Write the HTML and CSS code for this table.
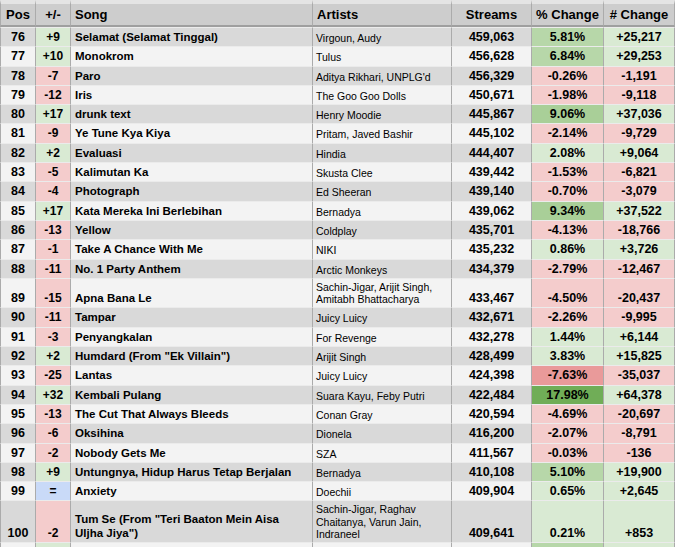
FILE: index.html
```html
<!DOCTYPE html>
<html>
<head>
<meta charset="utf-8">
<link rel="stylesheet" href="styles.css">
</head>
<body>
<table class="chart">
  <colgroup>
    <col class="c-pos"><col class="c-chg"><col class="c-song"><col class="c-art"><col class="c-str"><col class="c-pct"><col class="c-num">
  </colgroup>
  <thead>
    <tr>
      <th>Pos</th><th>+/-</th><th class="left">Song</th><th class="left">Artists</th><th>Streams</th><th>% Change</th><th># Change</th>
    </tr>
  </thead>
  <tbody>
    <tr><td class="pos">76</td><td class="chg up">+9</td><td class="song">Selamat (Selamat Tinggal)</td><td class="art">Virgoun, Audy</td><td class="num">459,063</td><td class="num g2">5.81%</td><td class="num up">+25,217</td></tr>
    <tr><td class="pos">77</td><td class="chg up">+10</td><td class="song">Monokrom</td><td class="art">Tulus</td><td class="num">456,628</td><td class="num g2">6.84%</td><td class="num up">+29,253</td></tr>
    <tr><td class="pos">78</td><td class="chg dn">-7</td><td class="song">Paro</td><td class="art">Aditya Rikhari, UNPLG'd</td><td class="num">456,329</td><td class="num dn">-0.26%</td><td class="num dn">-1,191</td></tr>
    <tr><td class="pos">79</td><td class="chg dn">-12</td><td class="song">Iris</td><td class="art">The Goo Goo Dolls</td><td class="num">450,671</td><td class="num dn">-1.98%</td><td class="num dn">-9,118</td></tr>
    <tr><td class="pos">80</td><td class="chg up">+17</td><td class="song">drunk text</td><td class="art">Henry Moodie</td><td class="num">445,867</td><td class="num g3">9.06%</td><td class="num up">+37,036</td></tr>
    <tr><td class="pos">81</td><td class="chg dn">-9</td><td class="song">Ye Tune Kya Kiya</td><td class="art">Pritam, Javed Bashir</td><td class="num">445,102</td><td class="num dn">-2.14%</td><td class="num dn">-9,729</td></tr>
    <tr><td class="pos">82</td><td class="chg up">+2</td><td class="song">Evaluasi</td><td class="art">Hindia</td><td class="num">444,407</td><td class="num up">2.08%</td><td class="num up">+9,064</td></tr>
    <tr><td class="pos">83</td><td class="chg dn">-5</td><td class="song">Kalimutan Ka</td><td class="art">Skusta Clee</td><td class="num">439,442</td><td class="num dn">-1.53%</td><td class="num dn">-6,821</td></tr>
    <tr><td class="pos">84</td><td class="chg dn">-4</td><td class="song">Photograph</td><td class="art">Ed Sheeran</td><td class="num">439,140</td><td class="num dn">-0.70%</td><td class="num dn">-3,079</td></tr>
    <tr><td class="pos">85</td><td class="chg up">+17</td><td class="song">Kata Mereka Ini Berlebihan</td><td class="art">Bernadya</td><td class="num">439,062</td><td class="num g3">9.34%</td><td class="num up">+37,522</td></tr>
    <tr><td class="pos">86</td><td class="chg dn">-13</td><td class="song">Yellow</td><td class="art">Coldplay</td><td class="num">435,701</td><td class="num dn">-4.13%</td><td class="num dn">-18,766</td></tr>
    <tr><td class="pos">87</td><td class="chg dn">-1</td><td class="song">Take A Chance With Me</td><td class="art">NIKI</td><td class="num">435,232</td><td class="num up">0.86%</td><td class="num up">+3,726</td></tr>
    <tr><td class="pos">88</td><td class="chg dn">-11</td><td class="song">No. 1 Party Anthem</td><td class="art">Arctic Monkeys</td><td class="num">434,379</td><td class="num dn">-2.79%</td><td class="num dn">-12,467</td></tr>
    <tr><td class="pos">89</td><td class="chg dn">-15</td><td class="song">Apna Bana Le</td><td class="art">Sachin-Jigar, Arijit Singh, Amitabh Bhattacharya</td><td class="num">433,467</td><td class="num dn">-4.50%</td><td class="num dn">-20,437</td></tr>
    <tr><td class="pos">90</td><td class="chg dn">-11</td><td class="song">Tampar</td><td class="art">Juicy Luicy</td><td class="num">432,671</td><td class="num dn">-2.26%</td><td class="num dn">-9,995</td></tr>
    <tr><td class="pos">91</td><td class="chg dn">-3</td><td class="song">Penyangkalan</td><td class="art">For Revenge</td><td class="num">432,278</td><td class="num up">1.44%</td><td class="num up">+6,144</td></tr>
    <tr><td class="pos">92</td><td class="chg up">+2</td><td class="song">Humdard (From "Ek Villain")</td><td class="art">Arijit Singh</td><td class="num">428,499</td><td class="num up">3.83%</td><td class="num up">+15,825</td></tr>
    <tr><td class="pos">93</td><td class="chg dn">-25</td><td class="song">Lantas</td><td class="art">Juicy Luicy</td><td class="num">424,398</td><td class="num r2">-7.63%</td><td class="num dn">-35,037</td></tr>
    <tr><td class="pos">94</td><td class="chg up">+32</td><td class="song">Kembali Pulang</td><td class="art">Suara Kayu, Feby Putri</td><td class="num">422,484</td><td class="num g4">17.98%</td><td class="num up">+64,378</td></tr>
    <tr><td class="pos">95</td><td class="chg dn">-13</td><td class="song">The Cut That Always Bleeds</td><td class="art">Conan Gray</td><td class="num">420,594</td><td class="num dn">-4.69%</td><td class="num dn">-20,697</td></tr>
    <tr><td class="pos">96</td><td class="chg dn">-6</td><td class="song">Oksihina</td><td class="art">Dionela</td><td class="num">416,200</td><td class="num dn">-2.07%</td><td class="num dn">-8,791</td></tr>
    <tr><td class="pos">97</td><td class="chg dn">-2</td><td class="song">Nobody Gets Me</td><td class="art">SZA</td><td class="num">411,567</td><td class="num dn">-0.03%</td><td class="num dn">-136</td></tr>
    <tr><td class="pos">98</td><td class="chg up">+9</td><td class="song">Untungnya, Hidup Harus Tetap Berjalan</td><td class="art">Bernadya</td><td class="num">410,108</td><td class="num g2">5.10%</td><td class="num up">+19,900</td></tr>
    <tr><td class="pos">99</td><td class="chg eq">=</td><td class="song">Anxiety</td><td class="art">Doechii</td><td class="num">409,904</td><td class="num up">0.65%</td><td class="num up">+2,645</td></tr>
    <tr><td class="pos">100</td><td class="chg dn">-2</td><td class="song">Tum Se (From "Teri Baaton Mein Aisa<br>Uljha Jiya")</td><td class="art">Sachin-Jigar, Raghav Chaitanya, Varun Jain, Indraneel</td><td class="num">409,641</td><td class="num up">0.21%</td><td class="num up">+853</td></tr>
    <tr class="cut"><td class="pos"></td><td class="chg up"></td><td class="song"></td><td class="art"></td><td class="num"></td><td class="num g2"></td><td class="num up"></td></tr>
  </tbody>
</table>
</body>
</html>
```
FILE: styles.css
```css
html, body {
  margin: 0;
  padding: 0;
  background: #ffffff;
  overflow: hidden;
}

.chart {
  border-collapse: separate;
  border-spacing: 0;
  table-layout: fixed;
  width: 675px;
  font-family: "Liberation Sans", Arial, sans-serif;
  color: #000;
}

.c-pos { width: 36px; }
.c-chg { width: 35px; }
.c-song { width: 242px; }
.c-art { width: 139px; }
.c-str { width: 80px; }
.c-pct { width: 72px; }
.c-num { width: 71px; }

.chart th {
  background: #cdcdcd;
  border-top: 4px solid #e4e4e4;
  border-bottom: 2px solid #9f9f9f;
  border-right: 1px solid #ababab;
  font-size: 13px;
  font-weight: bold;
  line-height: 15px;
  padding: 3px 2px 3px;
  text-align: center;
  white-space: nowrap;
}

.chart th:first-child,
.chart td:first-child {
  border-left: 1px solid #ababab;
}

.chart th.left {
  text-align: left;
  padding-left: 4px;
}

.chart td {
  border-right: 1px solid #ababab;
  border-bottom: 1px solid #ebebeb;
  padding: 2px 3px;
  line-height: 14.3px;
  vertical-align: bottom;
  text-align: center;
  font-weight: bold;
  font-size: 12.5px;
}

.chart tbody tr:first-child td {
  border-top: 1px solid #ececec;
}

.chart tbody tr.cut td {
  height: 4px;
  padding: 0;
  line-height: 0;
  border-bottom: 0;
}

.chart tbody tr:nth-child(odd) td { background: #d9d9d9; }
.chart tbody tr:nth-child(even) td { background: #f3f3f3; }

.chart td.song {
  text-align: left;
  font-size: 11.5px;
  padding-left: 4px;
}

.chart td.art {
  text-align: left;
  font-weight: normal;
  font-size: 10.5px;
  line-height: 12.3px;
  padding-left: 3px;
}

.chart td.chg { font-size: 12px; }

.chart tbody tr td.up { background: #d9ead3; }
.chart tbody tr td.dn { background: #f4cccc; }
.chart tbody tr td.eq { background: #c9daf8; }
.chart tbody tr td.g2 { background: #b7d7a9; }
.chart tbody tr td.g3 { background: #a9cf98; }
.chart tbody tr td.g4 { background: #70ad57; }
.chart tbody tr td.r2 { background: #e99a9a; }
```
